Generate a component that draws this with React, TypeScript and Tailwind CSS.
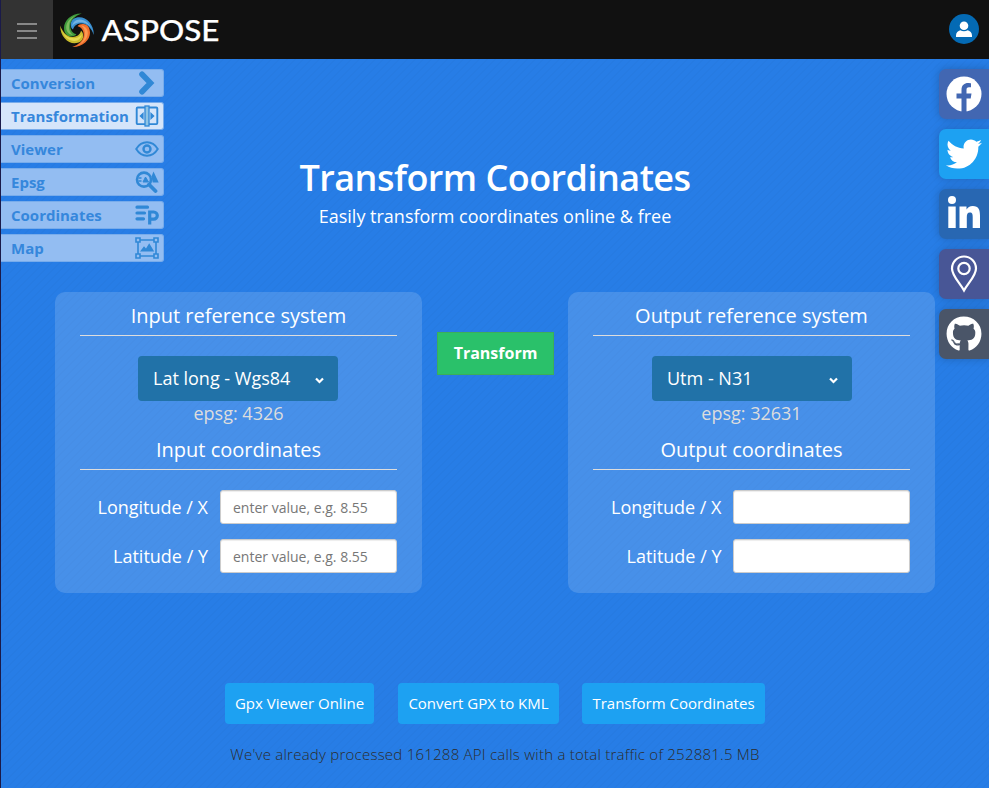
import React from "react";
import { FaTwitter, FaGithub } from "react-icons/fa";

const blue = "#3088d6";

function ChevronIcon() {
  return (
    <svg width="24" height="24" viewBox="0 0 24 24" fill="none" stroke={blue} strokeWidth="5.6">
      <path d="M7 3.200L15.500 12 7 20.800" strokeLinecap="round" />
    </svg>
  );
}
function TransformIcon() {
  return (
    <svg width="24" height="22" viewBox="0 0 24 22" fill="none" stroke={blue} strokeWidth="1.9">
      <rect x="1.700" y="2.500" width="20.600" height="16.600" rx="1" />
      <rect x="10" y="1" width="4" height="20" fill="#8fc4e4" strokeWidth="1.300" />
      <path d="M8.600 7v8l-4.200-4zM15.400 7v8l4.200-4z" fill={blue} stroke="none" />
    </svg>
  );
}
function EyeIcon() {
  return (
    <svg width="24" height="22" viewBox="0 0 24 22" fill="none" stroke={blue} strokeWidth="1.9">
      <path d="M1.200 11C4 6.400 7.500 4.300 12 4.300S20 6.400 22.800 11C20 15.600 16.500 17.700 12 17.700S4 15.600 1.200 11Z" />
      <circle cx="12" cy="11" r="3.500" strokeWidth="2.400" />
    </svg>
  );
}
function EpsgIcon() {
  return (
    <svg width="24" height="22" viewBox="0 0 24 22" fill="none" stroke={blue}>
      <circle cx="9" cy="8.600" r="7" strokeWidth="2.600" />
      <path d="M14 13.500l6.500 6.500" strokeWidth="3.800" strokeLinecap="round" />
      <path d="M3.500 7h3M3.500 10h3" strokeWidth="1.400" />
      <path d="M8 11l2.500-5 3 5z" strokeWidth="1" fill={blue} />
      <path d="M18.500 .5l5.200 11h-6l-1.200-6z" fill={blue} stroke="none" />
    </svg>
  );
}
function CoordinatesIcon() {
  return (
    <svg width="24" height="22" viewBox="0 0 24 22" fill="none" stroke={blue} strokeWidth="3.2" strokeLinecap="round">
      <path d="M2 3.200h10.500M2 9h7.500M2 14.800h6.500" />
      <path d="M14.700 20.500V8h4a3.600 3.600 0 0 1 0 7.200h-4" strokeLinecap="butt" />
    </svg>
  );
}
function MapIcon() {
  return (
    <svg width="24" height="22" viewBox="0 0 24 22" fill="none" stroke={blue} strokeWidth="1.6">
      <path d="M5 3h14M5 19h14M3 5v12M21 5v12" />
      <path d="M1 1h4v4H1zM19 1h4v4h-4zM1 17h4v4H1zM19 17h4v4h-4z" />
      <path d="M5 14.500l4-5.200 2 2.200 3.200-5.200 5 8.200z" fill={blue} stroke="none" />
    </svg>
  );
}

const nav = [
  { label: "Conversion", icon: <ChevronIcon /> },
  { label: "Transformation", icon: <TransformIcon />, active: true },
  { label: "Viewer", icon: <EyeIcon /> },
  { label: "Epsg", icon: <EpsgIcon /> },
  { label: "Coordinates", icon: <CoordinatesIcon /> },
  { label: "Map", icon: <MapIcon /> },
];

const blades = [
  { angle: 0, dark: "#3f9a3c", light: "#7dbb5e" },
  { angle: 90, dark: "#3a8fd0", light: "#72b3e2" },
  { angle: 180, dark: "#f1702c", light: "#fb9a54" },
  { angle: 270, dark: "#c9bd2c", light: "#e6da52" },
];

function Logo() {
  return (
    <svg width="164" height="36" viewBox="0 0 164 36" className="ml-[6px]">
      <g transform="translate(18 18.2)">
        {blades.map((b) => (
          <g key={b.angle} transform={`rotate(${b.angle})`}>
            <path d="M4.700-16.800C-6-17-13-9.500-13-2.500-13 2.500-10.500 5.800-6.300 6.200-3.800 6.400-1.500 5.500-.6 4-5 3-6.900-1-6.700-5-6.500-10-2-14.500 4.700-16.800Z" fill={b.dark} />
            <path d="M-1-15C-7-12.500-11-7.500-10.800-2.500-10.600 1.500-8 4.500-4 4.800-7.500 2.500-8.300-1.500-7.900-5-7.400-9.500-4.800-12.800-1-15Z" fill={b.light} />
          </g>
        ))}
      </g>
      <text x="42.500" y="29.300" fill="#fff" stroke="#fff" strokeWidth="0.250" textLength="118" lengthAdjust="spacingAndGlyphs" className="font-[Lato,sans-serif] text-[28px] font-medium">ASPOSE</text>
    </svg>
  );
}

function UserIcon() {
  return (
    <svg width="16" height="17" viewBox="0 0 16 17" fill="#fff">
      <circle cx="8" cy="4.700" r="4.300" />
      <path d="M0 16v-1.500C0 11.500 2 10 4.300 9.300 6.500 10.700 9.500 10.700 11.700 9.300 14 10 16 11.500 16 14.500V16Z" />
    </svg>
  );
}
function FacebookIcon() {
  return (
    <svg width="36" height="36" viewBox="0 0 36 36">
      <circle cx="18" cy="18" r="17.500" fill="#fff" />
      <path d="M15.500 36V22.500h-5v-5h5V14c0-5 3-7 6.500-7 1.500 0 3 .3 3 .3v4h-2c-2 0-2.500 1.200-2.500 2.500v3.700h5l-.8 5h-4.200V36Z" fill="#4267b2" />
    </svg>
  );
}
function LinkedinIcon() {
  return (
    <svg width="32" height="32" viewBox="0 0 32 32" fill="#fff" className="mb-[4px]">
      <circle cx="4" cy="4" r="4" />
      <path d="M.3 10.500h7.400V32H.3zM11.500 10.500h7v3c1-1.900 3.300-3.500 6.300-3.500 6 0 7.200 4 7.200 9.500V32h-7.300V21.200c0-2.700-.3-4.700-2.800-4.700s-3.100 2-3.100 4.700V32h-7.300Z" />
    </svg>
  );
}
function PinIcon() {
  return (
    <svg width="28" height="38" viewBox="0 0 28 38" fill="none" stroke="#fff" strokeWidth="2.2">
      <path d="M14 35.500C10 28 2 21 2 13.500a12 12 0 0 1 24 0C26 21 18 28 14 35.500Z" />
      <circle cx="14" cy="13.500" r="5.700" />
    </svg>
  );
}

const social = [
  { name: "facebook", bg: "bg-[#4267b2]", icon: <FacebookIcon /> },
  { name: "twitter", bg: "bg-[#1da1f2]", icon: <FaTwitter size={36} /> },
  { name: "linkedin", bg: "bg-[#2867b2]", icon: <LinkedinIcon /> },
  { name: "places", bg: "bg-[#485696]", icon: <PinIcon /> },
  { name: "github", bg: "bg-[#4a5568]", icon: <FaGithub size={36} /> },
];

function Field({ label, placeholder }: { label: string; placeholder?: string }) {
  return (
    <div className="flex h-[34px] items-center justify-end">
      <label className={`text-[18px] leading-[34px] ${placeholder ? "mr-3" : "mr-[11.5px]"}`}>{label}</label>
      <input placeholder={placeholder} className="h-[34px] w-[177px] rounded-[3px] border border-[#ccc] bg-white px-3 text-[14px] text-[#555] shadow-[inset_0_1px_1px_rgba(0,0,0,0.075)] placeholder:text-[#777]" />
    </div>
  );
}

function Panel({ kind, system, epsg, placeholder }: { kind: string; system: string; epsg: string; placeholder?: string }) {
  return (
    <section className="h-[301px] w-[367px] rounded-[10px] bg-white/15 px-[25px] pt-[8px] text-white">
      <h2 className="h-[36px] border-b border-[#ddd] text-center text-[20px] leading-[31px]">{kind} reference system</h2>
      <div className={`mt-[20px] flex h-[45px] w-[200px] items-center justify-between rounded-[4px] bg-[#2172a8] pr-[14px] pl-[15px] text-[18px] ${kind === "Input" ? "ml-[58px]" : "ml-[59px]"}`}>
        <span>{system}</span>
        <svg width="9" height="7" viewBox="0 0 9 7" className="mt-[3px]" fill="none" stroke="#fff" strokeWidth="2.2"><path d="M1 1.500l3.500 3.500L8 1.500" /></svg>
      </div>
      <p className="h-[25px] text-center text-[18px] leading-[25px] text-[#ddd]">epsg: {epsg}</p>
      <h2 className="mt-[8px] h-[36px] border-b border-[#ddd] text-center text-[20px] leading-[31px]">{kind} coordinates</h2>
      <div className="mt-[20px] flex flex-col gap-[15px]">
        <Field label="Longitude / X" placeholder={placeholder} />
        <Field label="Latitude / Y" placeholder={placeholder} />
      </div>
    </section>
  );
}

export default function App() {
  return (
    <div className="relative h-[788px] w-[990px] overflow-hidden border-r border-l border-r-white border-l-[#1a1a4a] bg-[#277de6] font-['Open_Sans',sans-serif]">
      <header className="flex h-[59px] items-center bg-[#111]">
        <div className="flex h-full w-[52px] flex-col items-center justify-center gap-[5px] bg-[#333] pt-[3px]">
          <i className="h-[2px] w-5 bg-[#888]" /><i className="h-[2px] w-5 bg-[#888]" /><i className="h-[2px] w-5 bg-[#888]" />
        </div>
        <Logo />
        <div className="mr-[10px] mb-px ml-auto flex size-[30px] items-center justify-center rounded-full bg-[#046ab4]"><UserIcon /></div>
      </header>
      <main className="h-[729px] bg-[repeating-linear-gradient(135deg,transparent_0px,transparent_3.600px,rgba(0,0,0,0.028)_4.600px,transparent_5.657px)] pt-[98px]">
        <h1 className="text-center text-[36px] leading-[42px] font-semibold tracking-[-0.54px] text-white">Transform Coordinates</h1>
        <p className="mt-[4px] text-center text-[18px] leading-[27px] text-white">Easily transform coordinates online &amp; free</p>
        <div className="mt-[62px] flex items-start px-[54px]">
          <Panel kind="Input" system="Lat long - Wgs84" epsg="4326" placeholder="enter value, e.g. 8.55" />
          <button className="mt-[40px] ml-[15px] h-[43px] w-[117px] border border-[#3cae5a] bg-[#2ac16a] pb-[2px] text-[16px] font-bold text-white">Transform</button>
          <div className="ml-[14px]"><Panel kind="Output" system="Utm - N31" epsg="32631" /></div>
        </div>
        <div className="mt-[90px] ml-[224px] flex text-[15px] text-white">
          <a className="flex h-[41px] w-[149px] items-center justify-center rounded-[4px] bg-[#1da1f2]">Gpx Viewer Online</a>
          <a className="ml-[24px] flex h-[41px] w-[161px] items-center justify-center rounded-[4px] bg-[#1da1f2]">Convert GPX to KML</a>
          <a className="ml-[23px] flex h-[41px] w-[183px] items-center justify-center rounded-[4px] bg-[#1da1f2]">Transform Coordinates</a>
        </div>
        <p className="mt-[19px] text-center text-[15px] leading-[22px] font-light tracking-[0.24px] text-[#2b2b2b]">We've already processed 161288 API calls with a total traffic of 252881.5 MB</p>
      </main>
      <nav className="absolute top-[69px] left-0 flex w-[163px] flex-col gap-[5px]">
        {nav.map((n) => (
          <a key={n.label} className={`flex h-[28px] items-center justify-between rounded-r-[3px] border border-l-0 border-[#78aceb] pr-[4px] pl-[10px] text-[15px] font-bold text-[#3587dc] ${n.active ? "bg-[#d5e5fa]" : "bg-[#93bdf2]"}`}>
            {n.label}{n.icon}
          </a>
        ))}
      </nav>
      <aside className="absolute top-[69px] right-0 flex flex-col gap-[10px]">
        {social.map((s) => (
          <a key={s.name} className={`flex size-[50px] items-center justify-center rounded-l-[7px] text-white shadow-[0_0_8px_rgba(0,0,0,0.2)] ${s.bg}`}>{s.icon}</a>
        ))}
      </aside>
    </div>
  );
}
